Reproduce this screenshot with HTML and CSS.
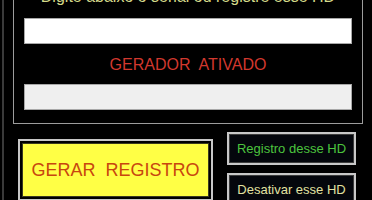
FILE: index.html
```html
<!DOCTYPE html>
<html lang="pt">
<head>
    <meta charset="UTF-8">
    <meta name="viewport" content="width=device-width, initial-scale=1.0">
    <title>Gerador</title>
    <link rel="stylesheet" href="styles.css">
</head>
<body>
    <div class="window">
        <div class="frame">
            <p class="title">Digite abaixo o serial ou registre esse HD</p>
            <input class="field" type="text">
            <p class="status">GERADOR&nbsp; ATIVADO</p>
            <input class="field field-off" type="text" disabled>
        </div>
        <div class="actions">
            <button class="btn-big" type="button"><span class="face">GERAR&nbsp; REGISTRO</span></button>
            <div class="side">
                <button class="btn-dark green" type="button">Registro desse HD</button>
                <button class="btn-dark pale" type="button">Desativar esse HD</button>
            </div>
        </div>
    </div>
</body>
</html>
```

FILE: styles.css
```css
* {
    box-sizing: border-box;
}
body {
    margin: 0;
    padding: 0;
    background-color: #000;
    font-family: "Liberation Sans", Arial, sans-serif;
    overflow: hidden;
}
.window {
    margin-left: 2px;
    height: 200px;
    border-left: 2px solid #3a3a3a;
    overflow: hidden;
}
.frame {
    margin: -20px 0 0 9px;
    width: 350px;
    border: 1px solid #9c9c9c;
    padding: 7px 10px 13px;
}
.title {
    margin: 0;
    font-size: 16px;
    line-height: 18px;
    text-align: center;
    color: #d4da8a;
    white-space: nowrap;
}
.field {
    display: block;
    width: 328px;
    height: 26px;
    margin: 12px 0 0;
    border: 1px solid #a8a8a8;
    background-color: #fff;
    padding: 0;
}
.field-off {
    margin-top: 10px;
    background-color: #efefef;
}
.status {
    margin: 12px 0 0;
    font-size: 16px;
    line-height: 18px;
    text-align: center;
    color: #d2382e;
}
.actions {
    display: flex;
    align-items: flex-start;
    padding-left: 14px;
    gap: 14px;
}
.btn-big {
    margin-top: 15px;
    width: 195px;
    height: 62px;
    border: 2px solid #c8c8c8;
    background-color: #000;
    padding: 2px;
    display: flex;
}
.face {
    flex: 1;
    display: flex;
    align-items: center;
    justify-content: center;
    background-color: #ffff45;
    border: 1px solid #3a3a20;
    font-family: "Liberation Sans", Arial, sans-serif;
    font-size: 18px;
    color: #c8460f;
}
.side {
    margin-top: 8px;
    display: flex;
    flex-direction: column;
    gap: 8px;
}
.btn-dark {
    width: 129px;
    height: 33px;
    border: 2px solid #c8c8c8;
    outline: 1px solid #3c3c3c;
    outline-offset: -3px;
    background-color: #04060c;
    font-family: "Liberation Sans", Arial, sans-serif;
    font-size: 13px;
    padding: 0;
}
.green {
    color: #4cc43e;
}
.pale {
    color: #e2e2a2;
}
```
